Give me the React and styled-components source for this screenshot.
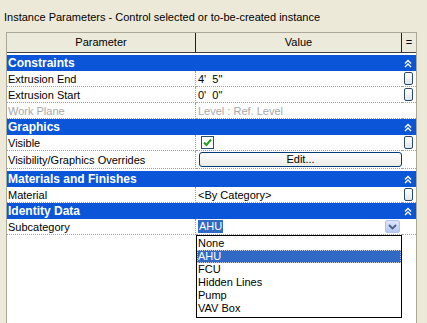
import React from 'react'
import styled, { createGlobalStyle } from 'styled-components'

const GlobalStyle = createGlobalStyle`
  html, body {
    margin: 0;
    padding: 0;
    background: #ece9d8;
    font-family: "Liberation Sans", Arial, sans-serif;
    font-size: 11px;
    color: #000;
  }
`

const Page = styled.div`
  width: 427px;
  height: 323px;
  overflow: hidden;
  display: flex;
  flex-direction: column;
  padding-top: 10px;
  box-sizing: border-box;
`

const Title = styled.div`
  height: 14px;
  line-height: 14px;
  padding-left: 4px;
  margin-bottom: 8px;
`

const Panel = styled.div`
  margin-left: 6px;
  width: 411px;
  flex: 1;
  background: #fff;
  border: 1px solid #aca899;
  border-bottom: none;
  box-sizing: border-box;
  display: flex;
  flex-direction: column;
`

const Grid = styled.div`
  display: grid;
  grid-template-columns: 189px 206px 1fr;
`

const HeadCell = styled.div`
  height: 19px;
  line-height: 19px;
  text-align: center;
  background: #ebeadb;
  border-bottom: 1px solid #404040;
  border-right: ${p => (p.$last ? 'none' : '1px solid #202020')};
  font-size: 11px;
`

const Spacer = styled.div`
  grid-column: 1 / -1;
  height: 2px;
`

const Group = styled.div`
  grid-column: 1 / -1;
  height: 16px;
  background: #0b55d9;
  color: #fff;
  font-weight: bold;
  font-size: 12px;
  display: flex;
  align-items: center;
  justify-content: space-between;
  padding: 0 4px 0 1px;
  margin-top: ${p => (p.$gap ? '2px' : '0')};
`

const Cell = styled.div`
  height: ${p => (p.$tall ? '17px' : '15px')};
  border-bottom: 1px dotted #a0a0a0;
  border-right: ${p => (p.$sep ? '1px dotted #a0a0a0' : 'none')};
  display: flex;
  align-items: center;
  padding-left: ${p => (p.$pad ? p.$pad : 0)}px;
  color: ${p => (p.$dim ? '#a8a8a8' : '#000')};
  white-space: pre;
  position: relative;
`

const AssocButton = styled.div`
  width: 9px;
  height: 13px;
  margin-left: 2px;
  border: 1px solid #2b4a6e;
  border-radius: 2px;
  background: linear-gradient(#fff, #dfe6ee);
  box-sizing: border-box;
`

const Check = styled.div`
  width: 13px;
  height: 13px;
  margin-left: 3px;
  border: 1px solid #1c5180;
  background: #fff;
  box-sizing: border-box;
  display: flex;
  align-items: center;
  justify-content: center;
`

const EditButton = styled.div`
  margin-left: 1px;
  width: 204px;
  height: 15px;
  border: 1px solid #003c74;
  border-radius: 3px;
  background: linear-gradient(#fff, #ecebe6);
  box-sizing: border-box;
  text-align: center;
  line-height: 13px;
`

const Selected = styled.span`
  background: #316ac5;
  color: #fff;
  padding: 0 1px;
  line-height: 13px;
`

const ComboButton = styled.div`
  position: absolute;
  right: 2px;
  top: 1px;
  width: 15px;
  height: 13px;
  border-radius: 2px;
  background: linear-gradient(#dbe5fb, #b6c9f1);
  border: 1px solid #b2c4ec;
  box-sizing: border-box;
  display: flex;
  align-items: center;
  justify-content: center;
`

const List = styled.div`
  position: absolute;
  left: 0;
  top: 16px;
  width: 206px;
  height: 83px;
  border: 1px solid #000;
  background: #fff;
  box-sizing: border-box;
  padding-top: 1px;
  z-index: 2;
`

const Option = styled.div`
  height: 13px;
  line-height: 13px;
  padding-left: 1px;
  background: ${p => (p.$active ? '#316ac5' : 'transparent')};
  color: ${p => (p.$active ? '#fff' : '#000')};
  outline: ${p => (p.$active ? '1px dotted #c0c8d8' : 'none')};
  outline-offset: -1px;
`

const Chevrons = () => (
  <svg width="8" height="9" viewBox="0 0 8 9">
    <path d="M1 4.5 L4 1.5 L7 4.5 M1 8 L4 5 L7 8" stroke="#fff" strokeWidth="1.4" fill="none" />
  </svg>
)

const CheckMark = () => (
  <svg width="9" height="9" viewBox="0 0 9 9">
    <path d="M1 4.5 L3.5 7 L8 1.5" stroke="#21a121" strokeWidth="2" fill="none" />
  </svg>
)

const DownArrow = () => (
  <svg width="9" height="6" viewBox="0 0 9 6">
    <path d="M1 1 L4.5 4.5 L8 1" stroke="#4d6185" strokeWidth="1.8" fill="none" />
  </svg>
)

const Row = ({ name, value, dim, assoc, tall }) => (
  <>
    <Cell $sep $pad={1} $dim={dim} $tall={tall}>{name}</Cell>
    <Cell $pad={2} $dim={dim} $tall={tall}>{value}</Cell>
    <Cell $tall={tall}>{assoc && <AssocButton />}</Cell>
  </>
)

const options = ['None', 'AHU', 'FCU', 'Hidden Lines', 'Pump', 'VAV Box']

export default function App() {
  return (
    <Page>
      <GlobalStyle />
      <Title>Instance Parameters - Control selected or to-be-created instance</Title>
      <Panel>
        <Grid>
          <HeadCell>Parameter</HeadCell>
          <HeadCell>Value</HeadCell>
          <HeadCell $last>=</HeadCell>
          <Spacer />

          <Group>Constraints<Chevrons /></Group>
          <Row name="Extrusion End" value={`4'  5"`} assoc />
          <Row name="Extrusion Start" value={`0'  0"`} assoc />
          <Row name="Work Plane" value="Level : Ref. Level" dim />

          <Group>Graphics<Chevrons /></Group>
          <Row name="Visible" value={<Check><CheckMark /></Check>} assoc />
          <Row name="Visibility/Graphics Overrides" value={<EditButton>Edit...</EditButton>} tall />

          <Group $gap>Materials and Finishes<Chevrons /></Group>
          <Row name="Material" value="<By Category>" assoc />

          <Group>Identity Data<Chevrons /></Group>
          <Cell $sep $pad={1}>Subcategory</Cell>
          <Cell $pad={2}>
            <Selected>AHU</Selected>
            <ComboButton><DownArrow /></ComboButton>
            <List>
              {options.map(o => (
                <Option key={o} $active={o === 'AHU'}>{o}</Option>
              ))}
            </List>
          </Cell>
          <Cell />
        </Grid>
      </Panel>
    </Page>
  )
}
